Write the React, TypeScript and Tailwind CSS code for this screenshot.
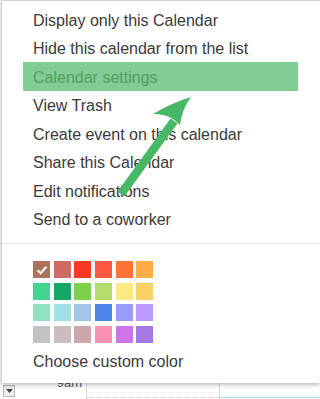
import React from "react";

const swatches = [
  ["#ac725e", "#d06b64", "#f83a22", "#fa573c", "#ff7537", "#ffad46"],
  ["#42d692", "#16a765", "#7bd148", "#b3dc6c", "#fbe983", "#fad165"],
  ["#92e1c0", "#9fe1e7", "#9fc6e7", "#4986e7", "#9a9cff", "#b99aff"],
  ["#c2c2c2", "#cabdbf", "#cca6ac", "#f691b2", "#cd74e6", "#a47ae2"],
];

const items = [
  "Display only this Calendar",
  "Hide this calendar from the list",
  "Calendar settings",
  "View Trash",
  "Create event on this calendar",
  "Share this Calendar",
  "Edit notifications",
  "Send to a coworker",
];

export default function App() {
  return (
    <div
      className="relative w-[320px] h-[399px] overflow-hidden bg-white"
      style={{ fontFamily: '"Liberation Sans", Arial, sans-serif' }}
    >
      {/* Menu */}
      <div className="relative z-10 ml-[1px] h-[383px] border-l border-t border-[#d0d0d0] bg-white shadow-[0_2px_4px_rgba(0,0,0,0.25)]">
        <ul className="pt-[4px] pl-[21px] pr-[22px]">
          {items.map((label, i) => (
            <li
              key={label}
              className={`h-[28.5px] flex items-center pt-[3px] pl-[10px] text-[16px] ${
                i === 2 ? "bg-[#81cd95] text-[#549e63]" : "text-[#3a3a3a]"
              }`}
            >
              {label}
            </li>
          ))}
        </ul>
        <div className="mt-[10px] h-px bg-[#e3e3e3]" />
        <div className="pl-[31px] pt-[17px]">
          <div className="grid grid-cols-[repeat(6,17px)] gap-x-[3.7px] gap-y-[4.7px]">
            {swatches.flat().map((c, i) => (
              <div
                key={i}
                className="w-[17px] h-[17px] flex items-center justify-center"
                style={{ backgroundColor: c }}
              >
                {i === 0 && (
                  <svg width="12" height="10" viewBox="0 0 12 10">
                    <path d="M1.5 5.2 L4.6 8.2 L10.5 1.8" fill="none" stroke="#fff" strokeWidth="2.2" />
                  </svg>
                )}
              </div>
            ))}
          </div>
          <div className="mt-[9px] text-[16px] text-[#3a3a3a] leading-[20px]">Choose custom color</div>
        </div>
      </div>

      {/* Calendar behind */}
      <div className="relative -mt-[8px] h-[24px] flex">
        <div className="w-[16px] flex items-end pb-[2px] pl-[3px]">
          <div className="w-[12px] h-[12px] border border-[#b5b5b5] bg-[#eeeeee] flex items-center justify-center">
            <svg width="7" height="4" viewBox="0 0 7 4">
              <path d="M0 0 H7 L3.5 4 Z" fill="#444" />
            </svg>
          </div>
        </div>
        <div className="w-[71px] border-r border-[#d6d6d6] text-right pr-[4px] text-[13px] text-[#555] leading-[16px]">9am</div>
        <div className="w-[133px] border-r border-[#d6d6d6] flex items-end">
          <div className="w-full border-b border-dotted border-[#cfcfcf] mb-[1px]" />
        </div>
        <div className="flex-1 flex items-end">
          <div className="w-full h-px bg-[#9fe1e7] mb-[1px]" />
        </div>
      </div>

      {/* Annotation arrow */}
      <svg className="absolute inset-0 z-20 pointer-events-none" width="320" height="399">
        <line x1="121" y1="194" x2="174" y2="121" stroke="#47b868" strokeWidth="8.5" />
        <path d="M191 97 Q171 103 153 114 Q165 114 171 118 Q176 121 180 125 Q182 109 191 97 Z" fill="#47b868" />
      </svg>
    </div>
  );
}
